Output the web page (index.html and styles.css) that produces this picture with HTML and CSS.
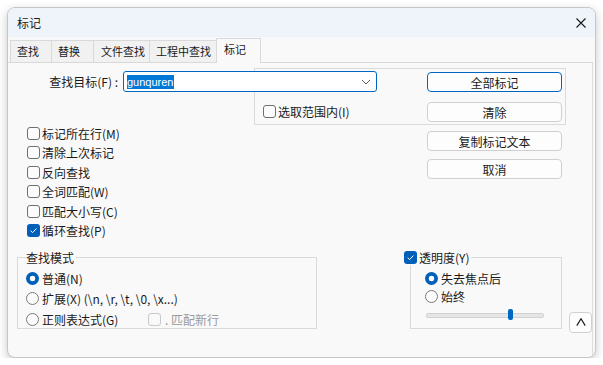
FILE: index.html
```
<!DOCTYPE html>
<html lang="zh-CN">
<head>
  <meta charset="UTF-8">
  <title>标记</title>
  <link rel="stylesheet" href="styles.css">
</head>
<body>

  <div class="window">
    <!-- Title bar -->
    <div class="titlebar">
      <span class="title">标记</span>
      <svg class="close" width="10" height="10" viewBox="0 0 10 10">
        <path d="M0.5 0.5 L9.5 9.5 M9.5 0.5 L0.5 9.5" stroke="#1a1a1a" stroke-width="1.1" fill="none"/>
      </svg>
    </div>

    <!-- Tabs -->
    <div class="tabs">
      <div class="tab tab-find">查找</div>
      <div class="tab tab-replace">替换</div>
      <div class="tab tab-files">文件查找</div>
      <div class="tab tab-project">工程中查找</div>
      <div class="tab tab-mark active">标记</div>
    </div>

    <div class="panel">
      <div class="scope-box"></div>

      <div class="top">
        <div class="left">
          <div class="field-row">
            <label class="field-label">查找目标(F) :</label>
            <div class="combo">
              <span class="sel">gunquren</span>
              <svg width="10" height="6" viewBox="0 0 10 6">
                <path d="M1 1 L5 5 L9 1" stroke="#5f5f5f" stroke-width="1" fill="none"/>
              </svg>
            </div>
          </div>

          <div class="check-row scope-row"><span class="box"></span>选取范围内(I)</div>

          <div class="options">
            <div class="check-row"><span class="box"></span>标记所在行(M)</div>
            <div class="check-row"><span class="box"></span>清除上次标记</div>
            <div class="check-row"><span class="box"></span>反向查找</div>
            <div class="check-row"><span class="box"></span>全词匹配(W)</div>
            <div class="check-row"><span class="box"></span>匹配大小写(C)</div>
            <div class="check-row">
              <span class="box checked">
                <svg width="13" height="13" viewBox="0 0 13 13"><path d="M3.6 6.7 L5.6 8.6 L9.4 4.6" stroke="#fff" stroke-width="1" fill="none"/></svg>
              </span>循环查找(P)
            </div>
          </div>
        </div>

        <div class="buttons">
          <button class="btn default">全部标记</button>
          <button class="btn">清除</button>
          <button class="btn">复制标记文本</button>
          <button class="btn">取消</button>
        </div>
      </div>

      <div class="bottom">
        <!-- Search mode -->
        <div class="group mode">
          <div class="legend">查找模式</div>
          <div class="radio-row"><span class="radio on"></span>普通(N)</div>
          <div class="radio-row"><span class="radio"></span>扩展(X) (\n, \r, \t, \0, \x...)</div>
          <div class="radio-row">
            <span class="radio-label"><span class="radio"></span>正则表达式(G)</span>
            <span class="disabled"><span class="box off"></span>. 匹配新行</span>
          </div>
        </div>

        <!-- Transparency -->
        <div class="group trans">
          <div class="legend">
            <span class="box checked">
              <svg width="13" height="13" viewBox="0 0 13 13"><path d="M3.6 6.7 L5.6 8.6 L9.4 4.6" stroke="#fff" stroke-width="1" fill="none"/></svg>
            </span>透明度(Y)
          </div>
          <div class="radio-row"><span class="radio on"></span>失去焦点后</div>
          <div class="radio-row"><span class="radio"></span>始终</div>
          <div class="slider"><span class="thumb"></span></div>
        </div>

        <button class="btn-collapse">
          <svg width="10" height="8" viewBox="0 0 10 8"><path d="M0.8 7.6 L5 0.8 L9.2 7.6" stroke="#1a1a1a" stroke-width="1.2" fill="none"/></svg>
        </button>
      </div>
    </div>
  </div>

</body>
</html>
```

FILE: styles.css
```
body {
  margin: 0;
  background-color: #fff;
  font-family: "Noto Sans CJK SC", sans-serif;
  font-size: 12px;
  color: #1a1a1a;
}

.window {
  margin: 7px 0 0 7px;
  width: 589px;
  height: 351px;
  box-sizing: border-box;
  border: 1px solid #c6c6c6;
  border-radius: 8px;
  background-color: #f9f9f9;
  box-shadow: 0 3px 10px rgba(0,0,0,0.22);
  overflow: hidden;
  display: flex;
  flex-direction: column;
}

.titlebar {
  flex: none;
  height: 29px;
  padding: 0 9px;
  background-color: #eef4f9;
  display: flex;
  align-items: center;
  justify-content: space-between;
}

.title {
  line-height: 29px;
}

/* Tabs */
.tabs {
  flex: none;
  height: 25px;
  padding-left: 2px;
  display: flex;
  align-items: flex-end;
  font-size: 11px;
}

.tab {
  height: 22px;
  box-sizing: border-box;
  border: 1px solid #d9d9d9;
  border-bottom: none;
  margin-left: -1px;
  padding-left: 6px;
  background-color: #f1f1f1;
  line-height: 21px;
}

.tab-find { width: 42px; margin-left: 0; }
.tab-replace { width: 43px; }
.tab-files { width: 57px; padding-left: 7px; }
.tab-project { width: 68px; }

.tab.active {
  width: 45px;
  height: 25px;
  margin-bottom: -1px;
  padding-left: 7px;
  background-color: #f9f9f9;
  position: relative;
  z-index: 2;
}

.panel {
  flex: 1;
  margin-right: 2px;
  border-top: 1px solid #d9d9d9;
  border-right: 1px solid #dcdcdc;
  position: relative;
}

.scope-box {
  position: absolute;
  left: 246px;
  top: 5px;
  width: 312px;
  height: 57px;
  box-sizing: border-box;
  border: 1px solid #dadada;
}

.top {
  display: flex;
}

.left {
  width: 419px;
}

.field-row {
  margin-top: 8px;
  height: 21px;
  display: flex;
  align-items: center;
  position: relative;
  z-index: 1;
}

.field-label {
  width: 110px;
  margin-right: 5px;
  text-align: right;
}

.combo {
  width: 254px;
  height: 21px;
  box-sizing: border-box;
  border: 1px solid #0067c0;
  border-radius: 3px;
  background-color: #fff;
  padding: 0 5px 0 3px;
  display: flex;
  align-items: center;
  justify-content: space-between;
}

.sel {
  background-color: #0078d7;
  color: #fff;
  font-family: "Liberation Sans", sans-serif;
  font-size: 11px;
  line-height: 14px;
}

/* Checkboxes */
.check-row {
  height: 19.4px;
  display: flex;
  align-items: center;
}

.scope-row {
  margin-top: 9.8px;
  padding-left: 255px;
  position: relative;
  z-index: 1;
}

.options {
  margin-top: 2.6px;
  padding-left: 19px;
}

.box {
  flex: none;
  width: 13px;
  height: 13px;
  box-sizing: border-box;
  border: 1px solid #6f6f6f;
  border-radius: 3px;
  background-color: #fcfcfc;
  margin-right: 2px;
}

.box.checked {
  border: none;
  background-color: #005fb8;
}

.box.checked svg {
  display: block;
}

.box.off {
  border-color: #c8c8c8;
  background-color: #f9f9f9;
}

/* Buttons */
.buttons {
  width: 135px;
  padding-top: 9px;
  position: relative;
  z-index: 1;
}

.btn {
  display: block;
  width: 135px;
  height: 20px;
  box-sizing: border-box;
  padding: 0;
  border: 1px solid #d0d0d0;
  border-radius: 4px;
  background-color: #fdfdfd;
  font: inherit;
  color: inherit;
  line-height: 17px;
  margin-top: 9px;
}

.btn:nth-child(1) { margin-top: 0; }
.btn:nth-child(2) { margin-top: 10px; }
.btn:nth-child(4) { margin-top: 8px; }

.btn.default {
  border-color: #0067c0;
}

/* Bottom groups */
.bottom {
  margin-top: 16.8px;
  display: flex;
  align-items: flex-start;
}

.group {
  position: relative;
  height: 72px;
  box-sizing: border-box;
  border: 1px solid #d9d9d9;
}

.legend {
  position: absolute;
  top: -7px;
  height: 14px;
  line-height: 14px;
  background-color: #f9f9f9;
  padding-right: 2px;
  display: flex;
  align-items: center;
}

.mode {
  margin-left: 9px;
  width: 300px;
  padding: 10px 0 0 8px;
}

.mode .legend {
  left: 8px;
}

.mode .radio-row {
  height: 20.5px;
}

.trans {
  margin-left: 93px;
  width: 152px;
  padding: 11.5px 0 0 14px;
}

.trans .legend {
  left: -7px;
}

.trans .radio-row {
  height: 18px;
}

.radio-row {
  display: flex;
  align-items: center;
}

.radio-label {
  width: 122px;
  display: flex;
  align-items: center;
}

.radio {
  flex: none;
  width: 13px;
  height: 13px;
  box-sizing: border-box;
  border: 1px solid #7a7a7a;
  border-radius: 50%;
  background-color: #fbfbfb;
  margin-right: 3px;
}

.radio.on {
  border: none;
  background: radial-gradient(circle, #fff 0 2.6px, #005fb8 3.1px);
}

.disabled {
  display: flex;
  align-items: center;
  color: #9a9a9a;
}

.disabled .box {
  margin-right: 4px;
}

.slider {
  position: relative;
  margin: 7.5px 0 0 1px;
  width: 118px;
  height: 5px;
  box-sizing: border-box;
  border: 1px solid #d2d2d2;
  border-radius: 2px;
  background-color: #e6e6e6;
}

.thumb {
  position: absolute;
  left: 81px;
  top: -5px;
  width: 5px;
  height: 11px;
  border-radius: 2px;
  background-color: #0067c0;
}

.btn-collapse {
  margin: 55px 0 0 7px;
  width: 23px;
  height: 21px;
  box-sizing: border-box;
  padding: 0;
  border: 1px solid #d0d0d0;
  border-radius: 4px;
  background-color: #fdfdfd;
  display: flex;
  align-items: center;
  justify-content: center;
}

.btn-collapse svg {
  display: block;
}
```
